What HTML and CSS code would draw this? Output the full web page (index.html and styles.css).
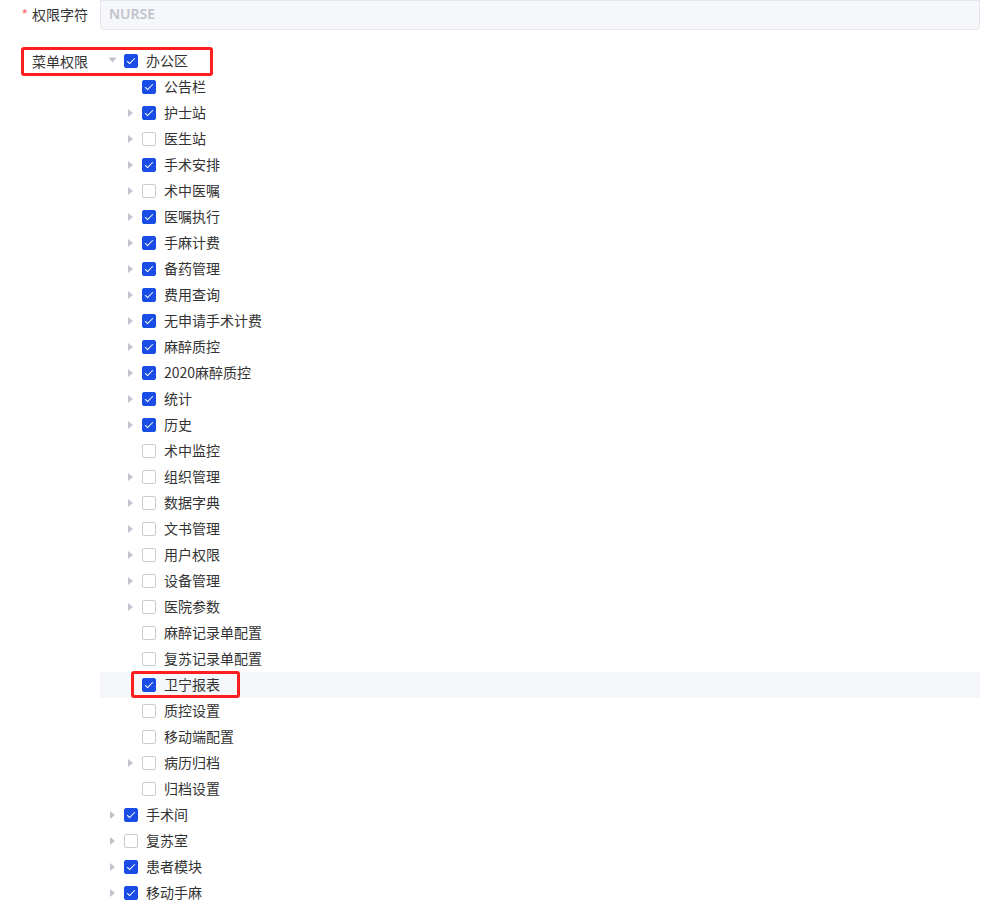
FILE: index.html
```html
<!DOCTYPE html>
<html lang="zh">
<head>
<meta charset="utf-8">
<link rel="stylesheet" href="styles.css">
</head>
<body>
<div class="form">
  <div class="form-item first">
    <label class="label"><span class="star">*</span>权限字符</label>
    <div class="content">
      <div class="input">NURSE</div>
    </div>
  </div>
  <div class="form-item tree-item">
    <label class="label tree-label">菜单权限</label>
    <div class="content">
      <div class="tree">
        <div class="node"><span class="caret open"></span><span class="cb on"></span><span class="txt">办公区</span></div>
        <div class="children">
          <div class="node l1"><span class="caret none"></span><span class="cb on"></span><span class="txt">公告栏</span></div>
          <div class="node l1"><span class="caret"></span><span class="cb on"></span><span class="txt">护士站</span></div>
          <div class="node l1"><span class="caret"></span><span class="cb"></span><span class="txt">医生站</span></div>
          <div class="node l1"><span class="caret"></span><span class="cb on"></span><span class="txt">手术安排</span></div>
          <div class="node l1"><span class="caret"></span><span class="cb"></span><span class="txt">术中医嘱</span></div>
          <div class="node l1"><span class="caret"></span><span class="cb on"></span><span class="txt">医嘱执行</span></div>
          <div class="node l1"><span class="caret"></span><span class="cb on"></span><span class="txt">手麻计费</span></div>
          <div class="node l1"><span class="caret"></span><span class="cb on"></span><span class="txt">备药管理</span></div>
          <div class="node l1"><span class="caret"></span><span class="cb on"></span><span class="txt">费用查询</span></div>
          <div class="node l1"><span class="caret"></span><span class="cb on"></span><span class="txt">无申请手术计费</span></div>
          <div class="node l1"><span class="caret"></span><span class="cb on"></span><span class="txt">麻醉质控</span></div>
          <div class="node l1"><span class="caret"></span><span class="cb on"></span><span class="txt">2020麻醉质控</span></div>
          <div class="node l1"><span class="caret"></span><span class="cb on"></span><span class="txt">统计</span></div>
          <div class="node l1"><span class="caret"></span><span class="cb on"></span><span class="txt">历史</span></div>
          <div class="node l1"><span class="caret none"></span><span class="cb"></span><span class="txt">术中监控</span></div>
          <div class="node l1"><span class="caret"></span><span class="cb"></span><span class="txt">组织管理</span></div>
          <div class="node l1"><span class="caret"></span><span class="cb"></span><span class="txt">数据字典</span></div>
          <div class="node l1"><span class="caret"></span><span class="cb"></span><span class="txt">文书管理</span></div>
          <div class="node l1"><span class="caret"></span><span class="cb"></span><span class="txt">用户权限</span></div>
          <div class="node l1"><span class="caret"></span><span class="cb"></span><span class="txt">设备管理</span></div>
          <div class="node l1"><span class="caret"></span><span class="cb"></span><span class="txt">医院参数</span></div>
          <div class="node l1"><span class="caret none"></span><span class="cb"></span><span class="txt">麻醉记录单配置</span></div>
          <div class="node l1"><span class="caret none"></span><span class="cb"></span><span class="txt">复苏记录单配置</span></div>
          <div class="node l1 hover"><span class="caret none"></span><span class="cb on"></span><span class="txt">卫宁报表</span><span class="mark mark-b"></span></div>
          <div class="node l1"><span class="caret none"></span><span class="cb"></span><span class="txt">质控设置</span></div>
          <div class="node l1"><span class="caret none"></span><span class="cb"></span><span class="txt">移动端配置</span></div>
          <div class="node l1"><span class="caret"></span><span class="cb"></span><span class="txt">病历归档</span></div>
          <div class="node l1"><span class="caret none"></span><span class="cb"></span><span class="txt">归档设置</span></div>
        </div>
        <div class="node"><span class="caret"></span><span class="cb on"></span><span class="txt">手术间</span></div>
        <div class="node"><span class="caret"></span><span class="cb"></span><span class="txt">复苏室</span></div>
        <div class="node"><span class="caret"></span><span class="cb on"></span><span class="txt">患者模块</span></div>
        <div class="node"><span class="caret"></span><span class="cb on"></span><span class="txt">移动手麻</span></div>
      </div>
    </div>
    <span class="mark mark-a"></span>
  </div>
</div>
</body>
</html>
```

FILE: styles.css
```css
* { box-sizing: border-box; }
html, body {
  margin: 0;
  padding: 0;
  background: #ffffff;
}
body {
  font-family: "Noto Sans CJK SC", "Noto Sans", sans-serif;
  font-size: 14px;
  color: #333333;
}
.form {
  width: 980px;
}
.form-item {
  display: flex;
  position: relative;
}
.form-item.first {
  margin-bottom: 18px;
}
.label {
  width: 100px;
  flex: none;
  text-align: right;
  padding-right: 12px;
  line-height: 28px;
  color: #333333;
}
.tree-label {
  line-height: 26px;
}
.star {
  color: #f56c6c;
  margin-right: 4px;
}
.content {
  flex: 1;
}
.input {
  height: 30px;
  line-height: 26px;
  border: 1px solid #e4e7ed;
  border-radius: 0 0 4px 4px;
  background: #f5f7fa;
  color: #c0c4cc;
  padding: 0 8px;
  font-family: "Noto Sans", sans-serif;
  font-weight: 600;
}
.tree {
  display: flex;
  flex-direction: column;
}
.node {
  height: 26px;
  display: flex;
  align-items: center;
  position: relative;
}
.node.l1 {
  padding-left: 18px;
}
.node.hover {
  background: #f5f7fa;
}
.caret {
  width: 24px;
  height: 26px;
  flex: none;
  position: relative;
}
.caret::after {
  content: "";
  position: absolute;
  left: 10px;
  top: 9px;
  border-left: 5px solid #c0c4cc;
  border-top: 4px solid transparent;
  border-bottom: 4px solid transparent;
}
.caret.open::after {
  transform: rotate(90deg);
  left: 10px;
  top: 8px;
}
.caret.none::after {
  display: none;
}
.cb {
  width: 14px;
  height: 14px;
  flex: none;
  border: 1px solid #c8ccd4;
  border-radius: 2px;
  background: #ffffff;
  margin-right: 8px;
  position: relative;
}
.cb.on {
  background: #1a4de6;
  border-color: #1a4de6;
}
.cb.on::after {
  content: "";
  position: absolute;
  left: 4px;
  top: 1px;
  width: 3px;
  height: 7px;
  border-right: 1px solid #ffffff;
  border-bottom: 1px solid #ffffff;
  transform: rotate(45deg);
}
.txt {
  line-height: 24px;
  padding-bottom: 2px;
  white-space: nowrap;
}
.mark {
  position: absolute;
  border: 3px solid #ff1e1e;
  border-radius: 3px;
  pointer-events: none;
}
.mark-a {
  left: 21px;
  top: -1px;
  width: 192px;
  height: 29px;
}
.mark-b {
  left: 31px;
  top: -1px;
  width: 109px;
  height: 27px;
}
```
